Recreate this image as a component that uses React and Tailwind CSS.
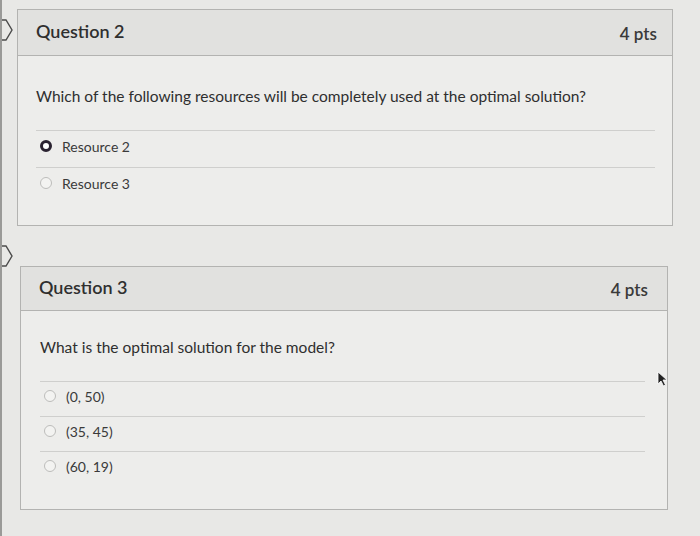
import React from "react";

const questions = [
  {
    num: 2,
    pts: "4 pts",
    text: "Which of the following resources will be completely used at the optimal solution?",
    options: ["Resource 2", "Resource 3"],
    selected: 0,
  },
  {
    num: 3,
    pts: "4 pts",
    text: "What is the optimal solution for the model?",
    options: ["(0, 50)", "(35, 45)", "(60, 19)"],
    selected: -1,
  },
];

function Flag({ className }) {
  return (
    <svg className={className} width="12" height="22" viewBox="0 0 12 22" fill="none">
      <path d="M-6 1 H4 L10 11 L4 21 H-6" stroke="#4b4b4b" strokeWidth="1.4" />
    </svg>
  );
}

function Radio({ checked }) {
  if (checked) {
    return (
      <span className="w-[12px] h-[12px] rounded-full border-[3.5px] border-[#2a2230] bg-white shrink-0" />
    );
  }
  return <span className="w-[12px] h-[12px] rounded-full border border-[#bdbdbb] bg-[#f3f3f1] shrink-0" />;
}

function Question({ q, wrap, card, header, pad, qTop, rowH, rowPl }) {
  return (
    <div className={"relative " + wrap}>
      <Flag className="absolute left-0 top-[19px]" />
      <div className={"flex flex-col border border-[#b3b3b1] bg-[#ededeb] " + card}>
        <div className={"flex items-center justify-between bg-[#e1e1df] border-b border-[#b3b3b1] " + header}>
          <span className="text-[18px] font-semibold text-[#2f2f2f] mb-[3px]">Question {q.num}</span>
          <span className="text-[17px] font-semibold text-[#3a3a3a] mt-[3px]">{q.pts}</span>
        </div>
        <div className={pad}>
          <p className={"text-[15.5px] text-[#2f2f2f] " + qTop}>{q.text}</p>
          <div className="mt-[22px] flex flex-col">
            {q.options.map((o, i) => (
              <div
                key={o}
                className={"flex items-center gap-[10px] border-t border-[#cfcfcd] text-[14px] text-[#3a3a3a] " + rowH + " " + rowPl}
              >
                <Radio checked={q.selected === i} />
                <span>{o}</span>
              </div>
            ))}
          </div>
        </div>
      </div>
    </div>
  );
}

export default function App() {
  return (
    <div
      className="relative w-[700px] h-[536px] overflow-hidden bg-[#e8e8e6] border-l-[2px] border-[#9a9a98]"
      style={{ fontFamily: "Lato, 'Open Sans', sans-serif" }}
    >
      <Question
        q={questions[0]}
        wrap="pt-[9px]"
        card="ml-[15px] w-[656px] h-[217px]"
        header="h-[46px] pl-[18px] pr-[15px]"
        pad="pl-[18px] pr-[17px]"
        qTop="mt-[29px]"
        rowH="h-[37px] pb-[6px]"
        rowPl="pl-[4px]"
      />
      <Question
        q={questions[1]}
        wrap="pt-[40px]"
        card="ml-[18px] w-[648px] h-[244px]"
        header="h-[44px] pl-[18px] pr-[19px]"
        pad="pl-[19px] pr-[22px]"
        qTop="mt-[25px]"
        rowH="h-[35px] pb-[6px]"
        rowPl="pl-[4px]"
      />
      <svg className="absolute left-[655px] top-[371px]" width="12" height="16" viewBox="0 0 12 16">
        <path d="M1 1 L1 13 L4 10 L6.5 15 L8.5 14 L6 9 L10 9 Z" fill="#222" stroke="#fff" strokeWidth="0.8" />
      </svg>
    </div>
  );
}
